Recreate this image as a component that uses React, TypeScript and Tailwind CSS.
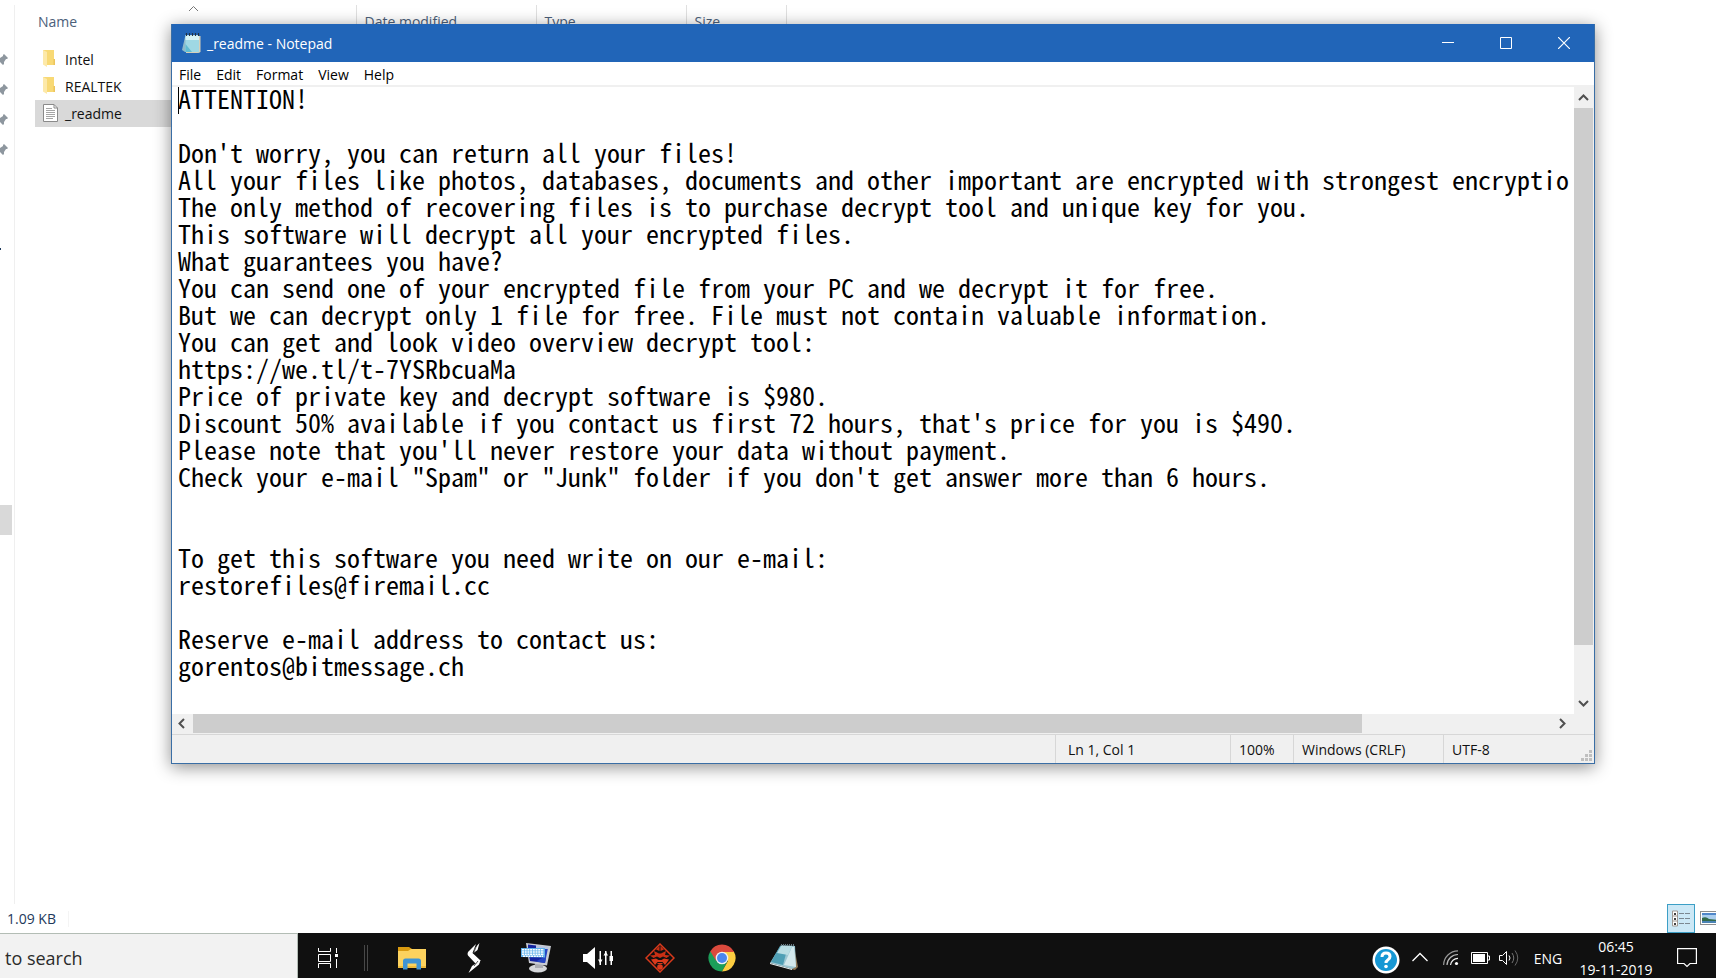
import type { ReactNode } from 'react';

const NOTE = `ATTENTION!

Don't worry, you can return all your files!
All your files like photos, databases, documents and other important are encrypted with strongest encryptio
The only method of recovering files is to purchase decrypt tool and unique key for you.
This software will decrypt all your encrypted files.
What guarantees you have?
You can send one of your encrypted file from your PC and we decrypt it for free.
But we can decrypt only 1 file for free. File must not contain valuable information.
You can get and look video overview decrypt tool:
https://we.tl/t-7YSRbcuaMa
Price of private key and decrypt software is $980.
Discount 50% available if you contact us first 72 hours, that's price for you is $490.
Please note that you'll never restore your data without payment.
Check your e-mail "Spam" or "Junk" folder if you don't get answer more than 6 hours.


To get this software you need write on our e-mail:
restorefiles@firemail.cc

Reserve e-mail address to contact us:
gorentos@bitmessage.ch`;

const MENUS = ['File', 'Edit', 'Format', 'View', 'Help'];

function Arrow({ d }: { d: string }) {
  return (
    <svg width="11" height="11" viewBox="0 0 11 11" fill="none" stroke="#505050" strokeWidth="2">
      <path d={d} />
    </svg>
  );
}

function Pin() {
  return (
    <svg width="10" height="14" viewBox="0 0 10 14" fill="#8e979f" className="block">
      <path d="M4 0 L8 4 L7 5 L6 5 L4 8 L4 10 L3 11 L0 8 L0 4 L3 2 L3 1 Z" />
    </svg>
  );
}

function FolderIcon() {
  return (
    <svg width="14" height="20" viewBox="0 0 14 20">
      <path d="M0 0 H11 V12 H12 V15 H3 L0 14 Z" fill="#f8d975" />
      <path d="M0 0 L4 2 V17 L0 14.500 Z" fill="#fde9a9" />
      <path d="M10.500 9 H12 V15 H10.500 Z" fill="#ecc45c" />
    </svg>
  );
}

function TextFileIcon() {
  return (
    <svg width="15" height="20" viewBox="0 0 15 20" fill="none" stroke="#8a8a8a">
      <path d="M.5 .5 H11 L14.500 4 V17.500 H.5 Z" fill="#fff" />
      <path d="M11 .5 V4 H14.500" />
      <path d="M3 4.500 H9 M3 6.500 H12 M3 8.500 H12 M3 10.500 H12 M3 12.500 H12 M3 14.500 H10" stroke="#a5a5a5" />
    </svg>
  );
}

function NotepadIcon() {
  return (
    <svg width="20" height="21" viewBox="0 0 20 21">
      <path d="M3 4 L0 17 L3 19 L17 20 L18 19 V3 Z" fill="#8fb9c9" />
      <path d="M3.500 2 H17 V19 H3.500 Z" fill="#9fd8e4" />
      <path d="M3.500 2 H17 V7 H3.500 Z" fill="#d6f3f5" />
      <path d="M3.500 11 L10 19 H3.500 Z" fill="#62bdd3" />
      <path d="M17 3 h1.500 v16 l-3 1 H4 v-1 h13z" fill="#d8d0b8" />
      <path d="M4.500 0 V3 M7.500 0 V3 M10.500 0 V3 M13.500 0 V3 M16.500 0 V3" stroke="#234" strokeWidth="1.200" />
    </svg>
  );
}

function TaskButton({ label, children }: { label: string; children: ReactNode }) {
  return (
    <button aria-label={label} className="w-[62px] h-full flex items-center justify-center pt-1">
      {children}
    </button>
  );
}

function Explorer() {
  return (
    <>
      <div className="flex-1 flex min-h-0">
        {/* Navigation pane, scrolled almost out of view */}
        <div className="w-[15px] mt-[5px] border-r border-[#efefef] shrink-0 flex flex-col">
          <div className="flex flex-col gap-4 pt-[49px]">
            <Pin />
            <Pin />
            <Pin />
            <Pin />
          </div>
          <span className="mt-[90px] w-px h-[2px] bg-[#1e395b]" />
          <span className="mt-[255px] w-3 h-[30px] bg-[#d9d9d9]" />
        </div>
        <div className="flex-1 pl-5 pt-[5px]">
          <table className="table-fixed w-[752px] text-[14px] border-collapse text-left">
            <thead className="text-[#4c607a]">
              <tr className="h-[41px] align-top">
                <th className="w-[321px] font-normal pl-[3px] pt-[6px] border-r border-[#e0e0e0] relative">
                  Name
                  <svg className="absolute left-[153px] top-0" width="11" height="7" viewBox="0 0 11 7" fill="none" stroke="#777">
                    <path d="M1 6 L5.500 1.500 L10 6" />
                  </svg>
                </th>
                <th className="w-[180px] font-normal pl-2 pt-[6px] border-r border-[#e0e0e0]">Date modified</th>
                <th className="w-[150px] font-normal pl-2 pt-[6px] border-r border-[#e0e0e0]">Type</th>
                <th className="font-normal pl-2 pt-[6px] border-r border-[#e0e0e0]">Size</th>
              </tr>
            </thead>
            <tbody className="text-[#111]">
              <tr className="h-[27px]">
                <td className="pl-2">
                  <span className="flex items-center gap-2"><FolderIcon />Intel</span>
                </td>
              </tr>
              <tr className="h-[27px]">
                <td className="pl-2">
                  <span className="flex items-center gap-2"><FolderIcon />REALTEK</span>
                </td>
              </tr>
              <tr className="h-[27px] bg-[#d9d9d9]">
                <td className="pl-2">
                  <span className="flex items-center gap-[7px]"><TextFileIcon />_readme</span>
                </td>
              </tr>
            </tbody>
          </table>
        </div>
      </div>
      <div className="h-[29px] shrink-0 flex items-center text-[14px] text-[#1e395b]">
        <span className="pl-[7px] pr-3 border-r border-[#f4f4f4] leading-4">1.09 KB</span>
        <div className="ml-auto flex items-center h-full gap-[5px]">
          <button aria-label="Details view" className="w-7 h-full bg-[#cce8f6] border border-[#3c9fc6] flex items-center justify-center">
            <svg width="20" height="17" viewBox="0 0 20 17" fill="none">
              <path d="M1.500 1 H6.500 V16 H1.500 Z M1.500 6 H6.500 M1.500 11 H6.500" fill="#fff" stroke="#a09a94" />
              <path d="M3 3 h2 v2 h-2z M3 8 h2 v2 h-2z M3 13 h2 v2 h-2z" fill="#444" />
              <path d="M8 3.500 H13 M14 3.500 H19 M8 8.500 H13 M14 8.500 H19 M8 13.500 H13 M14 13.500 H19" stroke="#7c8891" />
            </svg>
          </button>
          <button aria-label="Large icons view" className="w-4 overflow-hidden">
            <svg width="22" height="15" viewBox="0 0 22 15" className="max-w-none">
              <rect x=".5" y=".5" width="21" height="13" fill="#fff" stroke="#8d8d8d" />
              <rect x="2" y="2" width="18" height="10" fill="#a9cdee" />
              <path d="M2 2 H20 V4 H2 Z" fill="#4f86c9" />
              <path d="M2 7 Q6 5 9 8 L20 9 V10 H2 Z" fill="#336a4a" />
              <path d="M2 10 H20 V12 H2 Z" fill="#4a83b5" />
            </svg>
          </button>
        </div>
      </div>
    </>
  );
}

function NotepadWindow() {
  return (
    <div className="absolute left-[171px] right-[121px] top-6 bottom-[169px] flex flex-col border border-t-0 border-[#3a6ea5] bg-white shadow-[0_3px_16px_rgba(0,0,0,0.45)]">
      <div className="h-[38px] shrink-0 bg-[#2165b8] text-white flex items-center pl-[10px]">
        <NotepadIcon />
        <span className="text-[14px] pl-[5px]">_readme - Notepad</span>
        <div className="ml-auto mr-px flex h-full">
          <button aria-label="Minimize" className="w-[58px] flex items-center justify-center">
            <svg width="12" height="12" stroke="#fff"><path d="M0 5.500 H12" /></svg>
          </button>
          <button aria-label="Maximize" className="w-[58px] flex items-center justify-center">
            <svg width="12" height="12" stroke="#fff" fill="none"><path d="M.5 .5 H11.500 V11.500 H.5 Z" /></svg>
          </button>
          <button aria-label="Close" className="w-[58px] flex items-center justify-center">
            <svg width="12" height="12" stroke="#fff" strokeWidth="1.200"><path d="M0 0 L12 12 M12 0 L0 12" /></svg>
          </button>
        </div>
      </div>
      <div className="h-[25px] shrink-0 flex items-center gap-[15px] pt-[2px] pl-[7px] text-[14px] text-black border-b-2 border-[#f0f0f0]">
        {MENUS.map((m) => (
          <button key={m}>{m}</button>
        ))}
      </div>

      {/* Editor and vertical scrollbar */}
      <div className="flex-1 min-h-0 flex relative">
        <textarea
          aria-label="Text editor"
          wrap="off"
          spellCheck={false}
          readOnly
          defaultValue={NOTE}
          className="flex-1 min-w-0 -mt-[3px] resize-none overflow-hidden outline-none pl-[6px] font-['Noto_Sans_Mono_CJK_SC','Liberation_Mono',monospace] text-[26px] leading-[27px] text-black whitespace-pre"
        />
        <span className="absolute left-[6px] top-0 w-px h-[27px] bg-black" />
        <div className="w-5 bg-[#f0f0f0] flex flex-col pr-px">
          <button aria-label="Scroll up" className="h-[21px] flex items-center justify-center">
            <Arrow d="M1 8 L5.500 3.500 L10 8" />
          </button>
          <div className="flex-1">
            <div className="h-[92%] bg-[#cdcdcd]" />
          </div>
          <button aria-label="Scroll down" className="h-[22px] flex items-center justify-center">
            <Arrow d="M1 3 L5.500 7.500 L10 3" />
          </button>
        </div>
      </div>
      <div className="h-5 shrink-0 bg-[#f0f0f0] flex pr-[21px] pb-px">
        <button aria-label="Scroll left" className="w-[21px] flex items-center justify-center">
          <Arrow d="M7 1 L2.500 5.500 L7 10" />
        </button>
        <div className="flex-1">
          <div className="h-full w-[86%] bg-[#cdcdcd]" />
        </div>
        <button aria-label="Scroll right" className="w-[21px] flex items-center justify-center">
          <Arrow d="M3 1 L7.500 5.500 L3 10" />
        </button>
      </div>

      {/* Status bar */}
      <div className="h-[29px] shrink-0 bg-[#f0f0f0] border-t border-[#d7d7d7] flex items-stretch text-[14px] leading-[29px] text-[#111] relative">
        <span className="flex-1" />
        <span className="w-[175px] border-l border-[#d7d7d7] pl-3">Ln 1, Col 1</span>
        <span className="w-[63px] border-l border-[#d7d7d7] pl-2">100%</span>
        <span className="w-[150px] border-l border-[#d7d7d7] pl-2">Windows (CRLF)</span>
        <span className="w-[151px] border-l border-[#d7d7d7] pl-2">UTF-8</span>
        <svg className="absolute right-[2px] bottom-[2px]" width="11" height="11" fill="#bfbfbf">
          <path d="M8 0h3v3h-3z M4 4h3v3h-3z M8 4h3v3h-3z M0 8h3v3h-3z M4 8h3v3h-3z M8 8h3v3h-3z" />
        </svg>
      </div>
    </div>
  );
}

function Taskbar() {
  return (
    <div className="h-[45px] shrink-0 bg-[#101010] flex text-white overflow-hidden">
      <input
        type="text"
        aria-label="Search"
        placeholder="to search"
        className="w-[298px] h-full bg-[#f2f2f2] border-t border-r border-[#b3bdb5] pl-[5px] pt-1 text-[18px] placeholder:text-[#2b2b2b] outline-none"
      />
      <button aria-label="Task view" className="w-[60px] flex items-center justify-center pt-1">
        <svg width="20" height="20" viewBox="0 0 20 20" fill="none" stroke="#fff">
          <path d="M.5 0 V3.500 H12.500 V0 M.5 20 V15.500 H12.500 V20 M.5 6.500 H12.500 V13.500 H.5 Z" />
          <path d="M18.500 0 V5 M18.500 11 V20" />
          <path d="M17 6 h3 v3 h-3z" fill="#fff" stroke="none" />
        </svg>
      </button>
      <span className="ml-[6px] mr-[13px] mt-3 w-1 h-[26px] border-x border-[#484848]" />

      <TaskButton label="File Explorer">
        <svg width="28" height="24" viewBox="0 0 28 24">
          <path d="M0 1 H11 L14 3 V6 H0 Z" fill="#d99a10" />
          <path d="M0 5 H10 L13 3 H28 V22 H0 Z" fill="#fcd25e" />
          <path d="M0 20 H28 V22 H0Z" fill="#eebb3c" />
          <path d="M5 23.500 V15 Q5 12.500 7.500 12.500 H20.500 Q23 12.500 23 15 V23.500 H18.500 V17.500 H9.500 V23.500 Z" fill="#3f94d4" />
        </svg>
      </TaskButton>
      <TaskButton label="Shortcut">
        <svg width="14" height="30" viewBox="0 0 14 30" fill="#fff">
          <path d="M9 1 L1 9 Q0 11 1 12.500 L8.500 20.500 L12 20 L13.500 17.500 L5.500 10 Z" />
          <path d="M12.500 0 L8 5 L6.500 10 L10.500 7 Z" />
          <path d="M8 21 L5 23 L1.500 30 L12 21.500 L13.500 17 Z" />
          <path d="M9.500 2.500 L6.500 10.500 M7 23 L11 18" stroke="#101010" strokeWidth=".7" />
        </svg>
      </TaskButton>
      <TaskButton label="On-Screen Keyboard">
        <svg width="30" height="30" viewBox="0 0 30 30">
          <ellipse cx="17" cy="25.500" rx="9" ry="4" fill="#d5d7da" />
          <path d="M14 20 h8 v5 h-8z" fill="#aaacb2" />
          <path d="M5 0 L30 3 L26 22.500 L8 20 Z" fill="#c9ccd2" />
          <path d="M8 13 L25 14 L24 20 L9 18 Z" fill="#1524a0" />
          <path d="M7 1.500 L15 2.500 V6 H7 Z" fill="#1524a0" />
          <path d="M24 5 L27 5 L24 20 L15 18.500 L23 14 Z" fill="#2446c4" />
          <path d="M15 2.500 L27.500 4 L27 6 H15 Z" fill="#b8c4e0" />
          <path d="M0 5 H24 V14.500 L0 14 Z" fill="#5fb0ea" />
          <path d="M1 6.800 H23 M1 9 H23 M1 11.200 H23 M2 13.200 H22" stroke="#fff" strokeWidth="1.400" strokeDasharray="2 .7" />
        </svg>
      </TaskButton>
      <TaskButton label="Volume mixer">
        <svg width="30" height="22" viewBox="0 0 30 22" fill="#fff">
          <path d="M0 7 H4 L12 0 V22 L4 15 H0 Z" />
          <path d="M16.500 4 h1.500 v14 h-1.500z M22 4 h1.500 v14 h-1.500z M27.500 4 h1.500 v14 h-1.500z" />
          <path d="M15 12.500 h4.500 l-2.200 4z M20.500 8.500 h4.500 l-2.200-4z M26.500 9 h3.500 v5 h-3.500z" />
        </svg>
      </TaskButton>
      <TaskButton label="Dragon Center">
        <svg width="30" height="30" viewBox="0 0 30 30" fill="none" stroke="#d93a1c">
          <path d="M15 1 L29 15 L15 29 L1 15 Z" strokeWidth="1.500" />
          <path d="M14.500 3 V8 L11 6.500 Z M15.500 3 V8 L19 6.500 Z" fill="#c92f14" stroke="none" />
          <path d="M9 8 L14 10.500 H16 L21 8 L20 12 L25 12.500 L21.500 15 L18 13.500 L15 15 L12 13.500 L8.500 15 L5 12.500 L10 12 Z" fill="#c92f14" stroke="none" />
          <path d="M6 16.500 L11 15.500 L13.500 17 H16.500 L19 15.500 L24 16.500 L20 22 L17.500 19 H12.500 L10 22 Z" fill="#d93a1c" stroke="none" />
          <circle cx="15" cy="24" r="2.800" fill="#d93a1c" stroke="none" />
          <path d="M12.500 20.500 H17.500" />
        </svg>
      </TaskButton>
      <TaskButton label="Google Chrome">
        <svg width="28" height="28" viewBox="0 0 28 28">
          <path d="M2.300 7.250 A13.500 13.500 0 0 0 14 27.500 L19.600 17.300 L14 14 Z" fill="#1c9e59" />
          <path d="M25.700 7.250 A13.500 13.500 0 0 1 14 27.500 L19.800 17.300 L14 8 Z" fill="#fdcd41" />
          <path d="M2.300 7.250 L8.300 17.200 L14 8 H26.050 L25.700 7.250 A13.500 13.500 0 0 0 2.300 7.250 Z" fill="#db4a3d" />
          <circle cx="14" cy="14" r="6.300" fill="#f1f1f1" />
          <circle cx="14" cy="14" r="5" fill="#4a86ee" />
        </svg>
      </TaskButton>
      <TaskButton label="Notepad">
        <svg width="28" height="28" viewBox="0 0 28 28">
          <path d="M24 2 L28 23 L25 26 L20 25 Z" fill="#8d7656" />
          <path d="M11 1 L25 2 L26 23 L22 25 L0 19 Z" fill="#9cc6d2" />
          <path d="M10 2 L18 2 L13 21 L1 18 Z" fill="#4f9fb5" />
          <path d="M11 2 L22 2 L18 11 L7 9 Z" fill="#b9dde3" />
          <path d="M22 3 L24 3 L26 23 L14 21 Z" fill="#d3e8ec" />
          <path d="M0 19 L22 25 V26 L0 20 Z" fill="#eef6f7" />
          <path d="M11 1 H25" stroke="#687c84" strokeWidth="2" strokeDasharray="1 1" />
        </svg>
      </TaskButton>

      {/* Tray */}
      <div className="ml-auto flex h-full">
        <button aria-label="Help" className="w-9 flex items-center justify-center pt-2">
          <svg width="28" height="28" viewBox="0 0 28 28">
            <circle cx="14" cy="14" r="13.500" fill="#fff" />
            <circle cx="14" cy="14" r="11" fill="#1697d4" />
            <path d="M10 11 Q10 7 14 7 Q18 7 18 10.500 Q18 12.500 16 13.700 Q14 15 14 17" fill="none" stroke="#fff" strokeWidth="3" />
            <circle cx="14" cy="20.500" r="1.800" fill="#fff" />
          </svg>
        </button>
        <button aria-label="Show hidden icons" className="w-8 flex items-center justify-center pt-[2px]">
          <svg width="16" height="10" fill="none" stroke="#fff" strokeWidth="1.300"><path d="M.5 9 L8 1.500 L15.500 9" /></svg>
        </button>
        <button aria-label="Network" className="w-[29px] flex items-center justify-center pt-1">
          <svg width="16" height="16" viewBox="0 0 16 16" fill="none" stroke="#bbb" strokeWidth="1.200">
            <path d="M.6 15 A14.500 14.500 0 0 1 15 .8" stroke="#999" />
            <path d="M4 15 A11 11 0 0 1 15 4.500" />
            <path d="M7.500 15 A7.500 7.500 0 0 1 15 8.300" stroke="#eee" />
            <circle cx="13.500" cy="13.500" r="1.600" fill="#fff" stroke="none" />
          </svg>
        </button>
        <button aria-label="Battery" className="w-[30px] flex items-center justify-center pt-1">
          <svg width="19" height="12" viewBox="0 0 19 12" fill="none" stroke="#fff">
            <path d="M.5 .5 H16.500 V11.500 H.5 Z M16.500 4 H18.500 V8 H16.500" />
            <path d="M2 2 H14 V10 H2 Z" fill="#fff" stroke="none" />
          </svg>
        </button>
        <button aria-label="Volume" className="w-[27px] flex items-center justify-center pt-1">
          <svg width="20" height="18" viewBox="0 0 20 18" fill="none" stroke="#fff">
            <path d="M.5 6.500 H3.500 L7.500 2.500 V15.500 L3.500 11.500 H.5 Z" />
            <path d="M10 6.500 Q12 9 10 11.500" />
            <path d="M13 4 Q16.500 9 13 14" stroke="#777" />
            <path d="M16 1.500 Q21.500 9 16 16.500" stroke="#666" />
          </svg>
        </button>
        <button className="w-[52px] text-[14px] pt-[6px]">ENG</button>
        <button className="w-[84px] text-[14px] leading-[23px] pt-[2px] flex flex-col items-center">
          <span>06:45</span>
          <span>19-11-2019</span>
        </button>
        <button aria-label="Notifications" className="w-[58px] flex items-center justify-center pt-1">
          <svg width="20" height="20" viewBox="0 0 20 20" fill="none" stroke="#fff" strokeWidth="1.200">
            <path d="M.6 .6 H19.400 V15.500 H13 L10 18.500 L7 15.500 H.6 Z" />
          </svg>
        </button>
      </div>
    </div>
  );
}

export default function App() {
  return (
    <div className="h-screen flex flex-col bg-white overflow-hidden font-['Open_Sans','Noto_Sans',sans-serif]">
      <div className="flex-1 min-h-0 relative flex flex-col">
        <Explorer />
        <NotepadWindow />
      </div>
      <Taskbar />
    </div>
  );
}
